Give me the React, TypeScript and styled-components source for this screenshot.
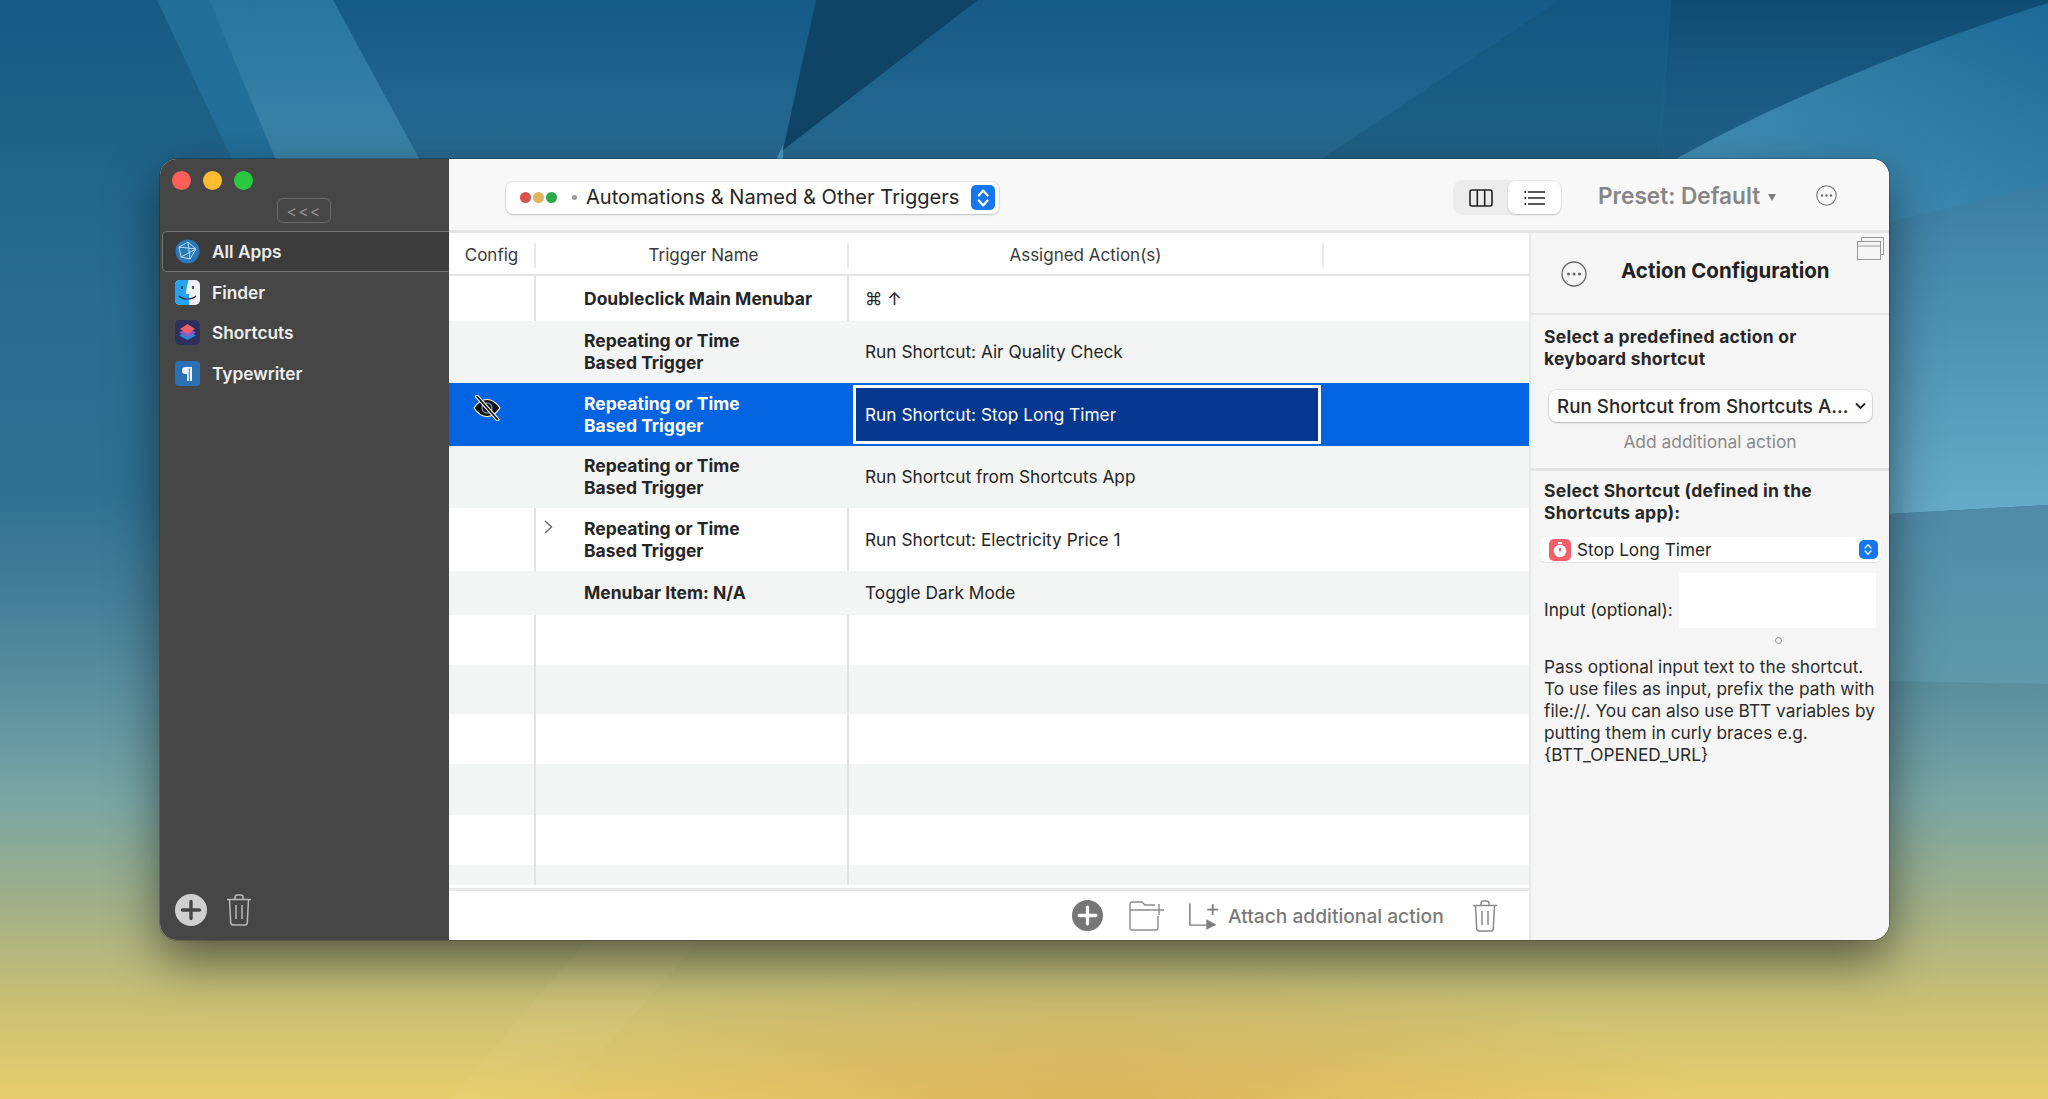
import React from "react";
import styled, { createGlobalStyle } from "styled-components";

const Global = createGlobalStyle`
  html, body { margin: 0; padding: 0; width: 2048px; height: 1099px; overflow: hidden; }
  body { font-family: Inter, "Liberation Sans", sans-serif; -webkit-font-smoothing: antialiased; }
  #root { width: 2048px; height: 1099px; }
  * { box-sizing: border-box; }
`;

const Desktop = styled.div`
  position: relative;
  width: 2048px;
  height: 1099px;
  padding: 159px 159px 159px 160px;
  overflow: hidden;
  background:
    radial-gradient(ellipse 620px 150px at 1090px 1110px, rgba(208, 160, 80, 0.55), rgba(208, 160, 80, 0) 100%),
    linear-gradient(180deg, #175a84 0%, #1c6086 9%, #2a6c91 27%, #2f7192 45%, #467f98 55%, #5e929f 64%, #7aa6a3 73%, #a0af88 82%, #c8bf74 91%, #e8ce6c 100%);
`;

const Wallpaper = styled.svg`
  position: absolute;
  inset: 0;
  width: 2048px;
  height: 1099px;
`;

const Window = styled.div`
  position: relative;
  display: flex;
  width: 1729px;
  height: 781px;
  border-radius: 17px;
  overflow: hidden;
  background: #f5f5f5;
  box-shadow: 0 20px 50px rgba(0, 0, 0, 0.5), 0 0 0 1px rgba(0, 0, 0, 0.2);
`;

const Sidebar = styled.aside`
  display: flex;
  flex-direction: column;
  flex: 0 0 289px;
  background: #464646;
  padding: 0 0 0 2px;
`;

const Lights = styled.div`
  display: flex;
  gap: 12px;
  padding: 12px 0 0 10px;
`;

const Light = styled.span<{ $c: string }>`
  width: 19px;
  height: 19px;
  border-radius: 50%;
  background: ${(p) => p.$c};
`;

const CollapseBtn = styled.div`
  align-self: flex-start;
  margin: 8px 0 0 115px;
  width: 54px;
  height: 25px;
  border: 1px solid #6a6a6a;
  border-radius: 6px;
  color: #8e8e8e;
  font-size: 16px;
  line-height: 24px;
  text-align: center;
  letter-spacing: 1px;
`;

const AppList = styled.div`
  display: flex;
  flex-direction: column;
  margin-top: 8px;
`;

const AppRow = styled.div<{ $active?: boolean }>`
  display: flex;
  align-items: center;
  gap: 12px;
  height: ${(p) => (p.$active ? "41px" : "40.5px")};
  padding-left: 12px;
  color: #ededed;
  font-size: 17.3px;
  font-weight: 600;
  ${(p) =>
    p.$active
      ? `background:#3c3c3c;border:1px solid #747474;border-right:none;border-radius:5px 0 0 5px;`
      : `border:1px solid transparent;`}
`;

const AppIcon = styled.svg`
  width: 25px;
  height: 25px;
  flex: none;
`;

const SidebarFoot = styled.div`
  margin-top: auto;
  display: flex;
  align-items: center;
  gap: 19px;
  padding: 0 0 14px 13px;
`;

const Main = styled.div`
  flex: 1;
  display: flex;
  flex-direction: column;
  min-width: 0;
`;

const Toolbar = styled.header`
  flex: 0 0 74px;
  display: flex;
  align-items: center;
  background: #f8f8f8;
  border-bottom: 3px solid #e3e3e3;
  padding: 6px 0 0 57px;
`;

const TriggerSelect = styled.div`
  flex: none;
  display: flex;
  align-items: center;
  width: 493px;
  height: 32px;
  background: #fff;
  border-radius: 7px;
  box-shadow: 0 0 0 1px rgba(0, 0, 0, 0.07), 0 1px 2px rgba(0, 0, 0, 0.18);
  padding: 0 4px 0 14px;
  color: #262626;
  font-size: 20.1px;
`;

const TriggerLabel = styled.span`
  margin-bottom: 2px;
  white-space: nowrap;
`;

const TitleDots = styled.span`
  display: flex;
  gap: 2px;
  margin-right: 15px;
`;

const TDot = styled.span<{ $c: string }>`
  width: 11px;
  height: 11px;
  border-radius: 50%;
  background: ${(p) => p.$c};
`;

const SmallDot = styled.span`
  width: 5px;
  height: 5px;
  border-radius: 50%;
  background: #9a9a9a;
  margin-right: 9px;
`;

const Stepper = styled.span<{ $small?: boolean }>`
  margin-left: auto;
  display: flex;
  align-items: center;
  justify-content: center;
  width: ${(p) => (p.$small ? "19px" : "24px")};
  height: ${(p) => (p.$small ? "19px" : "25px")};
  border-radius: 5px;
  background: #1477f0;
`;

const ViewToggle = styled.div`
  flex: none;
  margin-left: 455px;
  display: flex;
  width: 107px;
  height: 33px;
  background: #ececec;
  border-radius: 8px;
  box-shadow: 0 0 0 1px rgba(0, 0, 0, 0.05);
`;

const ToggleCell = styled.span<{ $on?: boolean }>`
  flex: ${(p) => (p.$on ? "0 0 53px" : "1")};
  display: flex;
  align-items: center;
  justify-content: center;
  border-radius: 8px;
  background: ${(p) => (p.$on ? "#fff" : "transparent")};
  box-shadow: ${(p) => (p.$on ? "0 1px 2px rgba(0,0,0,.2)" : "none")};
`;

const Preset = styled.div`
  flex: none;
  margin: 0 0 5px 37px;
  display: flex;
  align-items: center;
  gap: 8px;
  width: 218px;
  color: #868686;
  font-size: 22.6px;
  font-weight: 600;
`;

const Caret = styled.span`
  width: 0;
  height: 0;
  margin-top: 4px;
  border-left: 4px solid transparent;
  border-right: 4px solid transparent;
  border-top: 7px solid #7c7c7c;
`;

const ToolbarMore = styled.span`
  display: flex;
  margin-bottom: 5px;
`;

const Content = styled.div`
  flex: 1;
  display: flex;
  min-height: 0;
`;

const TableArea = styled.section`
  flex: 0 0 1082px;
  display: flex;
  flex-direction: column;
  background: #fff;
  border-right: 2px solid #e8e8e8;
`;

const HeaderRow = styled.div`
  flex: 0 0 43px;
  display: grid;
  grid-template-columns: 87px 313px 475px 1fr;
  align-items: center;
  border-bottom: 2px solid #e5e5e5;
  color: #3a3a3a;
  font-size: 17px;
`;

const HeaderCell = styled.div<{ $noLine?: boolean; $inset?: boolean }>`
  height: 25px;
  line-height: 25px;
  text-align: center;
  margin-top: 3px;
  padding-left: ${(p) => (p.$inset ? "24px" : "0")};
  border-right: ${(p) => (p.$noLine ? "none" : "2px solid #e8e8e8")};
`;

const Rows = styled.div`
  flex: 1;
  display: flex;
  flex-direction: column;
  overflow: hidden;
`;

const Row = styled.div<{ $h: number; $tone: "white" | "gray" | "sel" }>`
  flex: 0 0 ${(p) => p.$h}px;
  display: grid;
  grid-template-columns: 87px 273px 40px 1fr;
  align-items: stretch;
  background: ${(p) => (p.$tone === "gray" ? "#f3f4f4" : p.$tone === "sel" ? "#0364e1" : "#fff")};
  color: ${(p) => (p.$tone === "sel" ? "#fff" : "#252525")};
`;

const ConfigCell = styled.div<{ $line?: boolean }>`
  display: flex;
  align-items: flex-start;
  justify-content: center;
  padding: 12px 10px 0 0;
  border-right: 2px solid ${(p) => (p.$line ? "#e3e3e3" : "transparent")};
`;

const NameCell = styled.div<{ $line?: boolean }>`
  grid-column: 2 / 4;
  display: grid;
  grid-template-columns: 48px 1fr;
  align-items: center;
  border-right: 2px solid ${(p) => (p.$line ? "#e3e3e3" : "transparent")};
`;

const Chevron = styled.svg`
  grid-row: 1;
  grid-column: 1;
  align-self: start;
  margin: 12px 0 0 8px;
`;

const NameText = styled.div`
  grid-row: 1;
  grid-column: 2;
  font-size: 17.5px;
  font-weight: 700;
  line-height: 22px;
  white-space: pre-line;
`;

const ActionCell = styled.div`
  display: flex;
  align-items: center;
  padding: 0 0 1px 16px;
  font-size: 17.3px;
`;

const SelectedAction = styled.div`
  display: flex;
  align-items: center;
  width: 468px;
  margin: 2px 0 2px 4px;
  padding-left: 9px;
  background: #04388e;
  border: 3px solid #fff;
  font-size: 17.3px;
  color: #fff;
`;

const BottomBar = styled.div`
  flex: 0 0 52px;
  display: flex;
  align-items: center;
  border-top: 3px solid #e8e8e8;
  background: #fff;
  padding: 0 0 0 623px;
  color: #7a7a7a;
  font-size: 19.2px;
  font-weight: 500;
`;

const FolderIcon = styled.svg`
  margin-left: 26px;
`;

const AttachIcon = styled.svg`
  margin-left: 24px;
`;

const AttachLabel = styled.span`
  margin-left: 8px;
  margin-right: 28px;
  white-space: nowrap;
`;

const Panel = styled.aside`
  flex: 1;
  display: flex;
  flex-direction: column;
  position: relative;
  min-width: 0;
  background: #f5f5f5;
`;

const WindowsIcon = styled.svg`
  position: absolute;
  top: 4px;
  right: 5px;
`;

const PanelHead = styled.div`
  flex: 0 0 82px;
  display: flex;
  align-items: flex-start;
  border-bottom: 2px solid #e6e6e6;
  padding: 28px 0 0 30px;
`;

const PanelTitle = styled.h2`
  margin: -6px 0 0 34px;
  font-size: 20.5px;
  line-height: 32px;
  font-weight: 700;
  color: #222;
`;

const Section = styled.div`
  flex: 0 0 156px;
  padding: 11px 0 0 13px;
  border-bottom: 3px solid #e4e4e4;
`;

const Bold = styled.div`
  font-size: 17.5px;
  font-weight: 700;
  line-height: 22px;
  letter-spacing: 0.25px;
  color: #272727;
  white-space: nowrap;
`;

const ActionSelect = styled.div`
  display: flex;
  align-items: center;
  justify-content: space-between;
  width: 323px;
  height: 32px;
  margin: 20px 0 0 5px;
  padding: 0 6px 0 8px;
  background: #fff;
  border-radius: 8px;
  box-shadow: 0 0 0 1px rgba(0, 0, 0, 0.07), 0 1px 2px rgba(0, 0, 0, 0.2);
  font-size: 18.8px;
  font-weight: 500;
  color: #262626;
  white-space: nowrap;
`;

const AddAction = styled.div`
  margin-top: 9px;
  padding-right: 13px;
  text-align: center;
  color: #8b8b8b;
  font-size: 17.4px;
  line-height: 22px;
`;

const SectionTwo = styled.div`
  flex: 1;
  padding: 9px 12px 0 13px;
`;

const ShortcutSelect = styled.div`
  display: flex;
  align-items: center;
  gap: 6px;
  width: 341px;
  height: 25px;
  margin: 13px 0 0 -4px;
  padding: 0 3px 0 9px;
  background: #fff;
  border-radius: 6px;
  box-shadow: 0 1px 1px rgba(0, 0, 0, 0.08);
  font-size: 17.2px;
  color: #262626;
`;

const TimerIcon = styled.svg`
  flex: none;
`;

const InputRow = styled.div`
  display: flex;
  align-items: flex-start;
  margin-top: 11px;
  font-size: 17.3px;
  color: #262626;
  white-space: nowrap;
`;

const InputLabel = styled.span`
  padding-top: 26px;
  line-height: 22px;
`;

const InputBox = styled.div`
  flex: 0 0 197px;
  height: 55px;
  margin-left: 6px;
  background: #fff;
`;

const Ring = styled.div`
  width: 7px;
  height: 7px;
  margin: 9px 0 0 231px;
  border: 1.5px solid #8a8a8a;
  border-radius: 50%;
`;

const Help = styled.p`
  margin: 12px 0 0;
  font-size: 17.3px;
  line-height: 22px;
  color: #2c2c2c;
  white-space: pre;
`;

const PlusCircle = ({ size, bg, fg }: { size: number; bg: string; fg: string }) => (
  <svg width={size} height={size} viewBox="0 0 32 32">
    <circle cx="16" cy="16" r="16" fill={bg} />
    <path d="M16 7.5v17M7.5 16h17" stroke={fg} strokeWidth="3.4" strokeLinecap="round" />
  </svg>
);

const Trash = ({ c, w = 26, h = 32 }: { c: string; w?: number; h?: number }) => (
  <svg width={w} height={h} viewBox="0 0 26 32" fill="none" stroke={c} strokeWidth="1.5">
    <path d="M1 5.5h24M9 5V3.5C9 2 10 1 11.5 1h3C16 1 17 2 17 3.5V5" />
    <path d="M3.5 5.5 4.7 28.5C4.8 30 5.8 31 7.2 31h11.6c1.4 0 2.4-1 2.5-2.5L22.5 5.5" />
    <path d="M10 11v14M16 11v14" />
  </svg>
);

const MoreCircle = ({ size, c }: { size: number; c: string }) => (
  <svg width={size} height={size} viewBox="0 0 26 26" fill="none">
    <circle cx="13" cy="13" r="12" stroke={c} strokeWidth="1.3" />
    <circle cx="7.5" cy="13" r="1.5" fill={c} />
    <circle cx="13" cy="13" r="1.5" fill={c} />
    <circle cx="18.5" cy="13" r="1.5" fill={c} />
  </svg>
);

const StepperArrows = ({ size }: { size: number }) => (
  <svg width={size * 0.62} height={size} viewBox="0 0 10 16" fill="none" stroke="#fff" strokeWidth="1.8" strokeLinecap="round" strokeLinejoin="round">
    <path d="M1.5 6 5 2l3.5 4M1.5 10 5 14l3.5-4" />
  </svg>
);

const EyeOff = () => (
  <svg width="28" height="26" viewBox="0 0 28 26">
    <path d="M1 13C5 7 9 4.5 14 4.5S23 7 27 13c-4 6-8 8.5-13 8.5S5 19 1 13Z" fill="#111" stroke="#fff" strokeWidth="1.2" />
    <circle cx="14" cy="13" r="5" fill="none" stroke="#6b86a8" strokeWidth="1.4" />
    <path d="M4 1.5 24.5 24.5" stroke="#fff" strokeWidth="4" strokeLinecap="round" />
    <path d="M4 1.5 24.5 24.5" stroke="#111" strokeWidth="1.8" strokeLinecap="round" />
  </svg>
);

const rows = [
  { h: 45, tone: "white", name: "Doubleclick Main Menubar", action: "⌘ ↑", line: true },
  { h: 62, tone: "gray", name: "Repeating or Time\nBased Trigger", action: "Run Shortcut: Air Quality Check" },
  { h: 63, tone: "sel", name: "Repeating or Time\nBased Trigger", action: "Run Shortcut: Stop Long Timer", eye: true },
  { h: 62, tone: "gray", name: "Repeating or Time\nBased Trigger", action: "Run Shortcut from Shortcuts App" },
  { h: 63, tone: "white", name: "Repeating or Time\nBased Trigger", action: "Run Shortcut: Electricity Price 1", line: true, chevron: true },
  { h: 44, tone: "gray", name: "Menubar Item: N/A", action: "Toggle Dark Mode" },
  { h: 50, tone: "white", line: true },
  { h: 49, tone: "gray", line: true },
  { h: 50, tone: "white", line: true },
  { h: 51, tone: "gray", line: true },
  { h: 50, tone: "white", line: true },
  { h: 20, tone: "gray", line: true },
] as const;

export default function App() {
  return (
    <Desktop>
      <Global />
      <Wallpaper viewBox="0 0 2048 1099">
        <defs>
          <linearGradient id="band" x1="0" y1="0" x2="0" y2="1">
            <stop offset="0" stopColor="#27759f" />
            <stop offset="1" stopColor="#3d84a8" />
          </linearGradient>
          <linearGradient id="mid" x1="0" y1="0" x2="0" y2="1">
            <stop offset="0" stopColor="#155b88" />
            <stop offset="1" stopColor="#276b90" />
          </linearGradient>
          <linearGradient id="right" x1="0" y1="0" x2="0" y2="1">
            <stop offset="0" stopColor="#0f4c74" />
            <stop offset="1" stopColor="#2a6e94" />
          </linearGradient>
          <linearGradient id="wedge" x1="0.9" y1="0" x2="0.1" y2="1">
            <stop offset="0" stopColor="#1d6b97" />
            <stop offset="1" stopColor="#4a95b8" />
          </linearGradient>
          <linearGradient id="lit" x1="0" y1="0" x2="0" y2="1">
            <stop offset="0" stopColor="#3a7da2" />
            <stop offset="1" stopColor="#66abc7" />
          </linearGradient>
          <linearGradient id="lit2" x1="0" y1="0" x2="0" y2="1">
            <stop offset="0" stopColor="#4f8aa7" />
            <stop offset="1" stopColor="#5f99aa" />
          </linearGradient>
        </defs>
        <polygon points="333,0 1671,0 1656,159 420,159" fill="url(#mid)" />
        <polygon points="157,0 209,0 276,157 232,160" fill="#226f99" />
        <polygon points="209,0 333,0 420,160 276,160" fill="url(#band)" />
        <polygon points="816,0 978,0 783,150" fill="#0f4467" />
        <polygon points="783,145 783,160 776,160" fill="#4a9ac0" />
        <polygon points="1560,0 1671,0 1656,160 1320,160" fill="#0f4a6c" opacity="0.28" />
        <polygon points="1671,0 2048,0 2048,230 1656,230" fill="url(#right)" />
        <path d="M2048 3 C1930 40 1780 100 1674 160 L1889 230 L2048 200 Z" fill="url(#wedge)" />
        <polygon points="1889,222 2048,183 2048,505 1889,514" fill="url(#lit)" />
        <polygon points="1889,514 2048,505 2048,684 1889,681" fill="url(#lit2)" />
        <polygon points="587,940 700,940 560,1099 450,1099" fill="#e8dc90" opacity="0.1" />
      </Wallpaper>
      <Window>
        <Sidebar>
          <Lights>
            <Light $c="#ff5f57" />
            <Light $c="#febc2e" />
            <Light $c="#28c840" />
          </Lights>
          <CollapseBtn>&lt;&lt;&lt;</CollapseBtn>
          <AppList>
            <AppRow $active>
              <AppIcon viewBox="0 0 25 25">
                <circle cx="12.5" cy="12.5" r="12" fill="#2b78b8" />
                <path d="M4 8 13 3l8 7-6 10-9-2ZM13 3l2 17M4 8l17 2M6 18l15-8" stroke="#b9dcf3" strokeWidth="1" fill="none" />
              </AppIcon>
              All Apps
            </AppRow>
            <AppRow>
              <AppIcon viewBox="0 0 25 25">
                <rect width="25" height="25" rx="5" fill="#eef1f4" />
                <path d="M5 0h8.5C12 6 11 10 11 14h3c0 4 0 7 .5 11H5a5 5 0 0 1-5-5V5a5 5 0 0 1 5-5Z" fill="#27a3f3" />
                <path d="M7 6v3M18 6v3" stroke="#26333f" strokeWidth="1.6" />
                <path d="M4 16c4 4 13 4 17 0" stroke="#26333f" strokeWidth="1.2" fill="none" />
              </AppIcon>
              Finder
            </AppRow>
            <AppRow>
              <AppIcon viewBox="0 0 25 25">
                <rect width="25" height="25" rx="5" fill="#2d2f5c" />
                <path d="M12.5 11 21 15.5 12.5 20 4 15.5Z" fill="#2f86d6" />
                <path d="M12.5 8 21 12.5 12.5 17 4 12.5Z" fill="#8a5bc4" />
                <path d="M12.5 4 20 9l-7.5 5L5 9Z" fill="#ee5c6a" />
              </AppIcon>
              Shortcuts
            </AppRow>
            <AppRow>
              <AppIcon viewBox="0 0 25 25">
                <rect width="25" height="25" rx="4" fill="#2b70b3" />
                <path d="M17 6H10.5a3.5 3.5 0 0 0 0 7H12v7h1.8V7.5h1V20H17V6Z" fill="#f0f4f8" />
              </AppIcon>
              Typewriter
            </AppRow>
          </AppList>
          <SidebarFoot>
            <PlusCircle size={32} bg="#cfcfcf" fg="#464646" />
            <Trash c="#b9b9b9" />
          </SidebarFoot>
        </Sidebar>
        <Main>
          <Toolbar>
            <TriggerSelect>
              <TitleDots>
                <TDot $c="#d9534a" />
                <TDot $c="#e0b45a" />
                <TDot $c="#2aa84a" />
              </TitleDots>
              <SmallDot />
              <TriggerLabel>Automations &amp; Named &amp; Other Triggers</TriggerLabel>
              <Stepper>
                <StepperArrows size={20} />
              </Stepper>
            </TriggerSelect>
            <ViewToggle>
              <ToggleCell>
                <svg width="24" height="18" viewBox="0 0 24 18" fill="none" stroke="#222" strokeWidth="1.6">
                  <rect x="1" y="1" width="22" height="16" rx="2" />
                  <path d="M8.3 1v16M15.7 1v16" />
                </svg>
              </ToggleCell>
              <ToggleCell $on>
                <svg width="22" height="16" viewBox="0 0 22 16" fill="none" stroke="#222" strokeWidth="1.4">
                  <path d="M4 2h17M4 8h17M4 14h17" />
                  <path d="M.5 2h1.6M.5 8h1.6M.5 14h1.6" strokeWidth="1.8" />
                </svg>
              </ToggleCell>
            </ViewToggle>
            <Preset>
              Preset: Default
              <Caret />
            </Preset>
            <ToolbarMore>
              <MoreCircle size={21} c="#707070" />
            </ToolbarMore>
          </Toolbar>
          <Content>
            <TableArea>
              <HeaderRow>
                <HeaderCell>Config</HeaderCell>
                <HeaderCell $inset>Trigger Name</HeaderCell>
                <HeaderCell>Assigned Action(s)</HeaderCell>
                <HeaderCell $noLine />
              </HeaderRow>
              <Rows>
                {rows.map((r, i) => {
                  const line = "line" in r && r.line;
                  return (
                    <Row key={i} $h={r.h} $tone={r.tone}>
                      <ConfigCell $line={line}>
                        {"eye" in r && r.eye && <EyeOff />}
                      </ConfigCell>
                      <NameCell $line={line}>
                        {"chevron" in r && r.chevron && (
                          <Chevron width="9" height="14" viewBox="0 0 9 14" fill="none" stroke="#707070" strokeWidth="1.6">
                            <path d="M1 1l6.5 6L1 13" />
                          </Chevron>
                        )}
                        {"name" in r && <NameText>{r.name}</NameText>}
                      </NameCell>
                      {"eye" in r && r.eye ? (
                        <SelectedAction>{r.action}</SelectedAction>
                      ) : (
                        <ActionCell>{"action" in r ? r.action : null}</ActionCell>
                      )}
                    </Row>
                  );
                })}
              </Rows>
              <BottomBar>
                <PlusCircle size={31} bg="#767676" fg="#fff" />
                <FolderIcon width="36" height="30" viewBox="0 0 36 30" fill="none" stroke="#8a8a8a" strokeWidth="1.4">
                  <path d="M29 15v12c0 1.4-.8 2-2 2H3c-1.4 0-2-.6-2-2V3c0-1 .6-2 2-2h10l3 3h10" />
                  <path d="M1 9h22M30 3v11M23 9h12" />
                </FolderIcon>
                <AttachIcon width="31" height="30" viewBox="0 0 34 30" fill="none" stroke="#7d7d7d" strokeWidth="1.6">
                  <path d="M1 1v24h18" />
                  <path d="M19 18.5 30 24.5 19 30Z" fill="#7d7d7d" stroke="none" />
                  <path d="M26 2v12M20 8h12" strokeWidth="2" />
                </AttachIcon>
                <AttachLabel>Attach additional action</AttachLabel>
                <Trash c="#8a8a8a" />
              </BottomBar>
            </TableArea>
            <Panel>
              <WindowsIcon width="27" height="23" viewBox="0 0 27 23" fill="none" stroke="#9a9a9a" strokeWidth="1">
                <rect x="4.5" y="0.5" width="22" height="17" fill="#f5f5f5" />
                <rect x="0.5" y="4.5" width="23" height="18" fill="#f5f5f5" />
                <path d="M1 9h22" />
              </WindowsIcon>
              <PanelHead>
                <MoreCircle size={26} c="#666" />
                <PanelTitle>Action Configuration</PanelTitle>
              </PanelHead>
              <Section>
                <Bold>Select a predefined action or</Bold>
                <Bold>keyboard shortcut</Bold>
                <ActionSelect>
                  Run Shortcut from Shortcuts A...
                  <svg width="11" height="8" viewBox="0 0 11 8" fill="none" stroke="#222" strokeWidth="1.8">
                    <path d="M1 1.5 5.5 6 10 1.5" />
                  </svg>
                </ActionSelect>
                <AddAction>Add additional action</AddAction>
              </Section>
              <SectionTwo>
                <Bold>Select Shortcut (defined in the</Bold>
                <Bold>Shortcuts app):</Bold>
                <ShortcutSelect>
                  <TimerIcon width="22" height="22" viewBox="0 0 22 22">
                    <rect width="22" height="22" rx="5" fill="#f4606a" />
                    <circle cx="11" cy="12" r="6.2" fill="#fff" />
                    <rect x="9" y="3" width="4" height="2" fill="#fff" />
                    <path d="M11 9v3.5" stroke="#e04850" strokeWidth="1.6" />
                  </TimerIcon>
                  Stop Long Timer
                  <Stepper $small>
                    <StepperArrows size={13} />
                  </Stepper>
                </ShortcutSelect>
                <InputRow>
                  <InputLabel>Input (optional):</InputLabel>
                  <InputBox />
                </InputRow>
                <Ring />
                <Help>{"Pass optional input text to the shortcut.\nTo use files as input, prefix the path with\nfile://. You can also use BTT variables by\nputting them in curly braces e.g.\n{BTT_OPENED_URL}"}</Help>
              </SectionTwo>
            </Panel>
          </Content>
        </Main>
      </Window>
    </Desktop>
  );
}
